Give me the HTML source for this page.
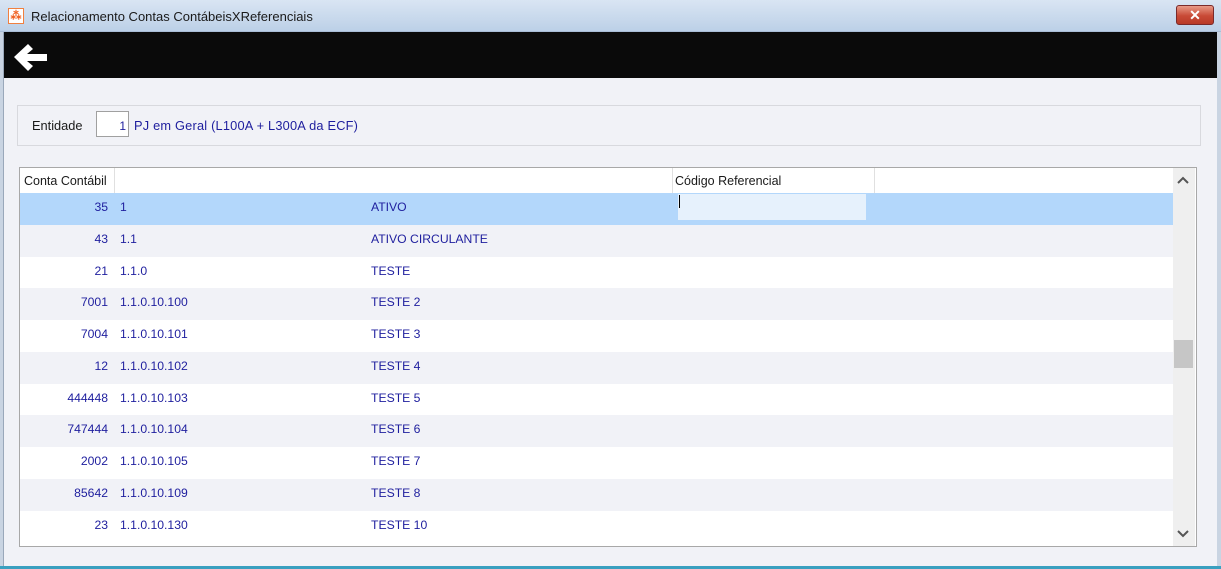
<!DOCTYPE html>
<html><head><meta charset="utf-8"><style>
*{margin:0;padding:0;box-sizing:border-box}
body{width:1221px;height:569px;position:relative;overflow:hidden;background:#f1f2f7;font-family:"Liberation Sans",sans-serif;font-size:12px}
.a{position:absolute}
.row{position:absolute;left:20px;width:1153px;color:#1e1e9e;white-space:nowrap;font-size:12.2px}
.row span{position:absolute;top:7px}
.n{right:1065px;text-align:right}
.c{left:100px}
.d{left:351px}
</style></head><body>
<div class="a" style="left:0;top:0;width:1221px;height:32px;background:linear-gradient(#d9e5f3,#bcd0e7);border-bottom:1px solid #a9bdd6"></div>
<div class="a" style="left:8px;top:8px;width:16px;height:16px;background:#fff;border:1px solid #f08040;color:#f06020;font-size:11px;line-height:14px;text-align:center;font-weight:bold">⁂</div>
<div class="a" style="left:31px;top:9px;font-size:13px;color:#1a1a1a">Relacionamento Contas ContábeisXReferenciais</div>
<div class="a" style="left:1176px;top:5px;width:38px;height:20px;border-radius:3px;border:1px solid #7a2a2a;background:linear-gradient(#e89a88,#c84a36 55%,#b83a28);color:#fff;font-weight:bold;font-size:14px;line-height:18px;text-align:center">✕</div>
<div class="a" style="left:0;top:32px;width:4px;height:537px;background:#c9d4e2;border-right:1px solid #9aa8ba"></div>
<div class="a" style="left:1217px;top:32px;width:4px;height:537px;background:#c9d4e2"></div>
<div class="a" style="left:4px;top:32px;width:1213px;height:46px;background:#0a0a0a"></div>
<svg class="a" style="left:13px;top:42px" width="36" height="30" viewBox="0 0 36 30"><path d="M1 15 L15 2 L20 7 L14 12 L34 12 L34 19 L14 19 L20 24 L15 29 Z" fill="#fff"/></svg>
<div class="a" style="left:17px;top:105px;width:1184px;height:41px;border:1px solid #d8d9de"></div>
<div class="a" style="left:32px;top:118px;color:#1a1a1a;font-size:12.8px">Entidade</div>
<div class="a" style="left:96px;top:111px;width:33px;height:26px;background:#fff;border:1px solid #a0a0a0;color:#1e1e9e;text-align:right;padding:7px 2px 0 0">1</div>
<div class="a" style="left:134px;top:118px;color:#1e1e9e;font-size:12.8px;letter-spacing:0.2px">PJ em Geral (L100A + L300A da ECF)</div>
<div class="a" style="left:19px;top:167px;width:1178px;height:380px;background:#fff;border:1px solid #a8a8a8"></div>
<div class="a" style="left:20px;top:168px;width:1153px;height:25px;background:#fff"></div>
<div class="a" style="left:24px;top:174px;color:#1a1a1a;font-size:12.5px">Conta Contábil</div>
<div class="a" style="left:114px;top:168px;width:1px;height:25px;background:#e0e0e0"></div>
<div class="a" style="left:672px;top:168px;width:1px;height:25px;background:#e0e0e0"></div>
<div class="a" style="left:874px;top:168px;width:1px;height:25px;background:#e0e0e0"></div>
<div class="a" style="left:675px;top:174px;color:#1a1a1a;font-size:12.5px">Código Referencial</div>
<div class="row" style="top:193px;height:32px;background:#b3d7fb"><span class="n">35</span><span class="c">1</span><span class="d">ATIVO</span></div>
<div class="a" style="left:678px;top:194px;width:188px;height:26px;background:#e6f1fc"></div>
<div class="a" style="left:679px;top:195px;width:1px;height:13px;background:#000"></div>
<div class="row" style="top:225px;height:32px;background:#f1f2f7"><span class="n">43</span><span class="c">1.1</span><span class="d">ATIVO CIRCULANTE</span></div>
<div class="row" style="top:257px;height:31px;background:#fff"><span class="n">21</span><span class="c">1.1.0</span><span class="d">TESTE</span></div>
<div class="row" style="top:288px;height:32px;background:#f1f2f7"><span class="n">7001</span><span class="c">1.1.0.10.100</span><span class="d">TESTE 2</span></div>
<div class="row" style="top:320px;height:32px;background:#fff"><span class="n">7004</span><span class="c">1.1.0.10.101</span><span class="d">TESTE 3</span></div>
<div class="row" style="top:352px;height:32px;background:#f1f2f7"><span class="n">12</span><span class="c">1.1.0.10.102</span><span class="d">TESTE 4</span></div>
<div class="row" style="top:384px;height:31px;background:#fff"><span class="n">444448</span><span class="c">1.1.0.10.103</span><span class="d">TESTE 5</span></div>
<div class="row" style="top:415px;height:32px;background:#f1f2f7"><span class="n">747444</span><span class="c">1.1.0.10.104</span><span class="d">TESTE 6</span></div>
<div class="row" style="top:447px;height:32px;background:#fff"><span class="n">2002</span><span class="c">1.1.0.10.105</span><span class="d">TESTE 7</span></div>
<div class="row" style="top:479px;height:32px;background:#f1f2f7"><span class="n">85642</span><span class="c">1.1.0.10.109</span><span class="d">TESTE 8</span></div>
<div class="row" style="top:511px;height:32px;background:#fff"><span class="n">23</span><span class="c">1.1.0.10.130</span><span class="d">TESTE 10</span></div>
<div class="a" style="left:1173px;top:168px;width:22px;height:378px;background:#efefef"></div>
<div class="a" style="left:1174px;top:340px;width:19px;height:28px;background:#c6c6c6"></div>
<svg class="a" style="left:1177px;top:176px" width="12" height="8"><path d="M1 7 L6 2 L11 7" stroke="#555" stroke-width="2" fill="none"/></svg>
<svg class="a" style="left:1177px;top:530px" width="12" height="8"><path d="M1 1 L6 6 L11 1" stroke="#555" stroke-width="2" fill="none"/></svg>
<div class="a" style="left:0;top:566px;width:1221px;height:3px;background:#3aa0c0"></div>
</body></html>
